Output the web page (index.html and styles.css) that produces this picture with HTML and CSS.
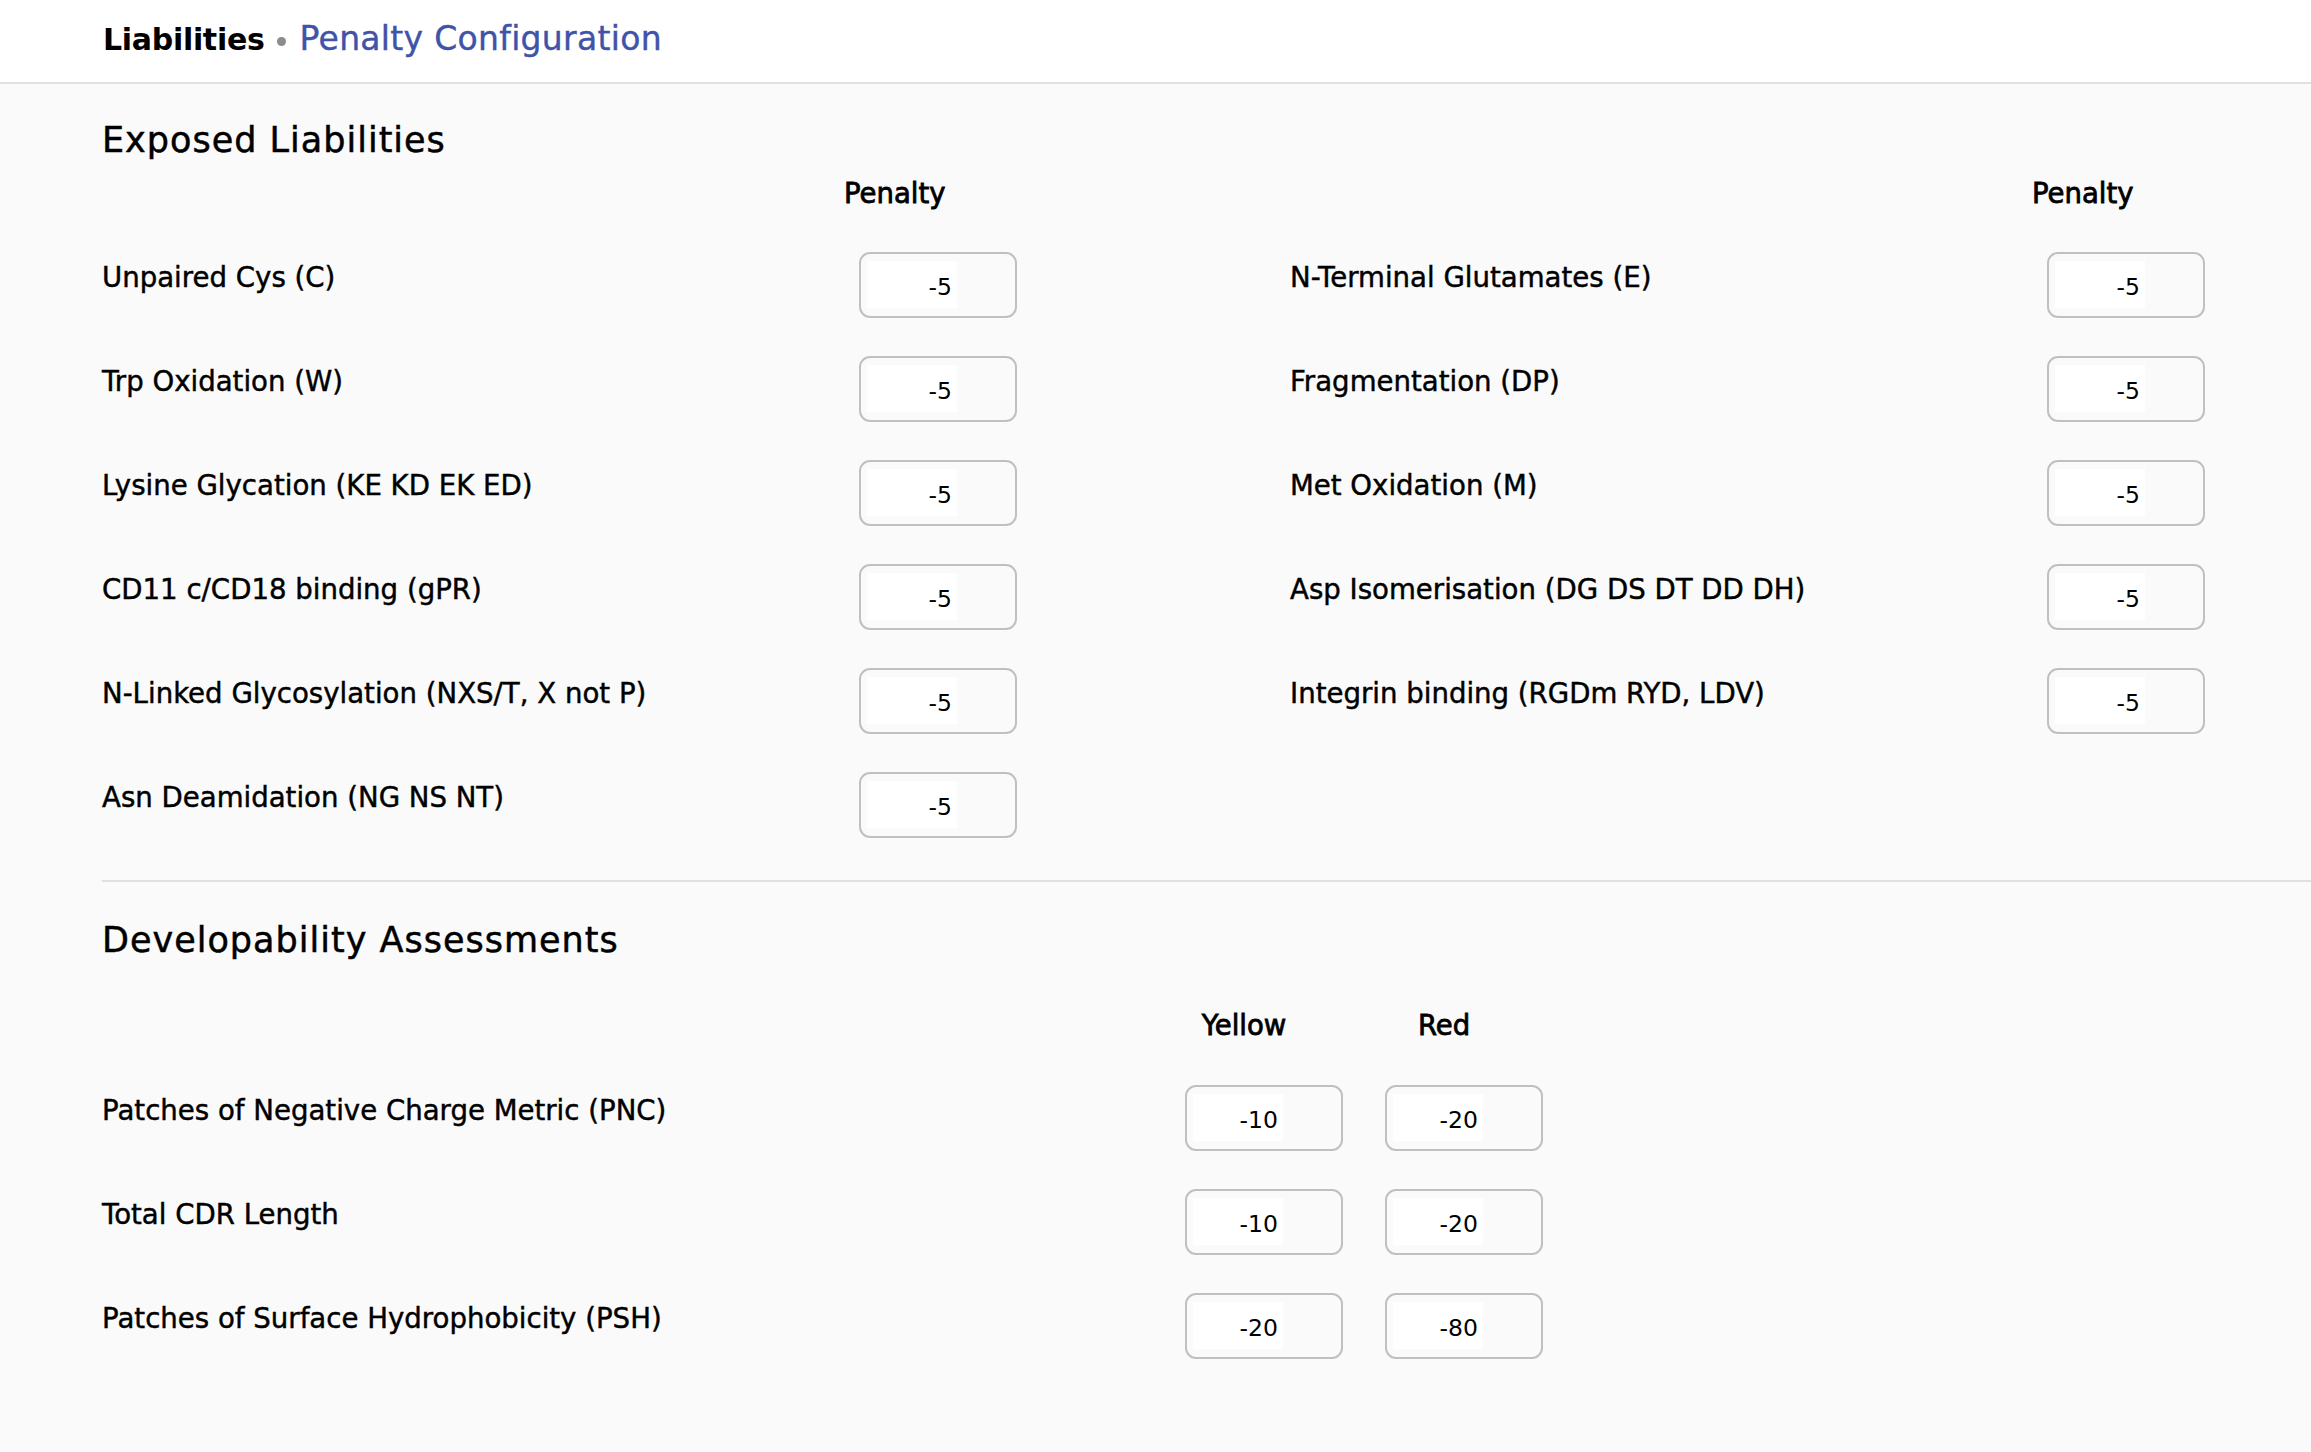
FILE: index.html
```html
<!DOCTYPE html>
<html>
<head>
<meta charset="utf-8">
<title>Liabilities • Penalty Configuration</title>
<link rel="stylesheet" href="styles.css">
</head>
<body>
<header class="topbar">
  <div class="crumbs"><span class="crumb-root">Liabilities</span><span class="crumb-dot"></span><span class="crumb-page">Penalty Configuration</span></div>
</header>
<main class="page">
  <section class="liab">
    <h2 class="section-title first">Exposed Liabilities</h2>
    <div class="liab-cols">
      <div class="liab-col">
        <div class="liab-head"><span class="col-head">Penalty</span></div>
        <div class="liab-row"><div class="label">Unpaired Cys (C)</div><div class="value"><div class="box"><span class="inp">-5</span></div></div></div>
        <div class="liab-row"><div class="label">Trp Oxidation (W)</div><div class="value"><div class="box"><span class="inp">-5</span></div></div></div>
        <div class="liab-row"><div class="label">Lysine Glycation (KE KD EK ED)</div><div class="value"><div class="box"><span class="inp">-5</span></div></div></div>
        <div class="liab-row"><div class="label">CD11 c/CD18 binding (gPR)</div><div class="value"><div class="box"><span class="inp">-5</span></div></div></div>
        <div class="liab-row"><div class="label">N-Linked Glycosylation (NXS/T, X not P)</div><div class="value"><div class="box"><span class="inp">-5</span></div></div></div>
        <div class="liab-row"><div class="label">Asn Deamidation (NG NS NT)</div><div class="value"><div class="box"><span class="inp">-5</span></div></div></div>
      </div>
      <div class="liab-col">
        <div class="liab-head"><span class="col-head">Penalty</span></div>
        <div class="liab-row"><div class="label">N-Terminal Glutamates (E)</div><div class="value"><div class="box"><span class="inp">-5</span></div></div></div>
        <div class="liab-row"><div class="label">Fragmentation (DP)</div><div class="value"><div class="box"><span class="inp">-5</span></div></div></div>
        <div class="liab-row"><div class="label">Met Oxidation (M)</div><div class="value"><div class="box"><span class="inp">-5</span></div></div></div>
        <div class="liab-row"><div class="label">Asp Isomerisation (DG DS DT DD DH)</div><div class="value"><div class="box"><span class="inp">-5</span></div></div></div>
        <div class="liab-row"><div class="label">Integrin binding (RGDm RYD, LDV)</div><div class="value"><div class="box"><span class="inp">-5</span></div></div></div>
      </div>
    </div>
  </section>
  <hr class="divider">
  <section class="dev">
    <h2 class="section-title second">Developability Assessments</h2>
    <div class="dev-grid">
      <div class="dev-spacer"></div>
      <div class="dev-head"><span class="col-head">Yellow</span></div>
      <div class="dev-head"><span class="col-head">Red</span></div>

      <div class="label">Patches of Negative Charge Metric (PNC)</div>
      <div class="box"><span class="inp">-10</span></div>
      <div class="box"><span class="inp">-20</span></div>

      <div class="label">Total CDR Length</div>
      <div class="box"><span class="inp">-10</span></div>
      <div class="box"><span class="inp">-20</span></div>

      <div class="label">Patches of Surface Hydrophobicity (PSH)</div>
      <div class="box"><span class="inp">-20</span></div>
      <div class="box"><span class="inp">-80</span></div>
    </div>
  </section>
</main>
</body>
</html>
```
FILE: styles.css
```css
* { box-sizing: border-box; }
html, body { margin: 0; padding: 0; }
body {
  background: #fafafa;
  color: #000;
  font-family: "DejaVu Sans", "Liberation Sans", sans-serif;
  overflow-x: hidden;
}

.topbar {
  height: 84px;
  background: #fff;
  border-bottom: 2px solid #e0e0e0;
  padding: 1px 0 0 103px;
  display: flex;
  align-items: center;
}
.crumbs {
  line-height: 40px;
  white-space: nowrap;
}
.crumb-root {
  font-size: 30px;
  font-weight: bold;
  letter-spacing: -0.3px;
}
.crumb-dot {
  display: inline-block;
  width: 9px;
  height: 9px;
  border-radius: 50%;
  background: #8c8c8c;
  margin: 0 14px 0 12px;
  vertical-align: 4px;
}
.crumb-page {
  font-size: 33px;
  letter-spacing: 0.3px;
  color: #3f53a9;
  -webkit-text-stroke: 0.4px #3f53a9;
}

.page {
  padding-left: 102px;
}

.section-title {
  margin: 0;
  font-size: 35px;
  line-height: 40px;
  font-weight: normal;
  letter-spacing: 1px;
  -webkit-text-stroke: 0.5px #000;
}
.section-title.first { margin-top: 36px; }
.section-title.second { margin-top: 38px; }

.liab-cols {
  display: grid;
  grid-template-columns: 1188px 1fr;
}
.liab-col {
  display: flex;
  flex-direction: column;
  gap: 38px;
}
.liab-head {
  margin-top: 16px;
  margin-bottom: 4px;
  padding-left: 742px;
  line-height: 34px;
  height: 34px;
}
.col-head {
  font-size: 27.5px;
  -webkit-text-stroke: 0.8px #000;
  white-space: nowrap;
}
.liab-row {
  display: flex;
  height: 66px;
}
.label {
  font-size: 27.6px;
  line-height: 34px;
  padding-top: 8.5px;
  -webkit-text-stroke: 0.45px #000;
  white-space: nowrap;
}
.liab-row .label { width: 742px; }
.value { padding-left: 15px; }

.box {
  width: 158px;
  height: 66px;
  border: 2px solid #c0c0c0;
  border-radius: 11px;
  padding: 7px 0 0 6px;
}
.inp {
  display: block;
  width: 90px;
  height: 47px;
  background: #fff;
  text-align: right;
  padding-right: 5px;
  font-size: 23.5px;
  line-height: 53px;
  overflow: hidden;
}

.divider {
  margin: 42px 0 0;
  border: 0;
  height: 2px;
  background: #e0e0e0;
}

.dev-grid {
  display: grid;
  grid-template-columns: 1041px 158px 158px;
  column-gap: 42px;
  row-gap: 38px;
  margin-top: 48px;
}
.dev-head {
  width: 118px;
  text-align: center;
  line-height: 34px;
  height: 34px;
  margin-bottom: 5px;
}
```
